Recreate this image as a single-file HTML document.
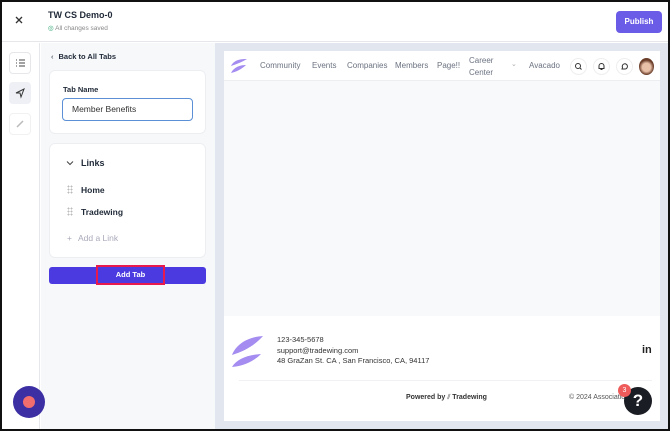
<!DOCTYPE html>
<html><head><meta charset="utf-8"><style>
*{box-sizing:border-box;margin:0;padding:0}
body{width:670px;height:431px;overflow:hidden;font-family:"Liberation Sans",sans-serif;background:#111;position:relative}
.a{position:absolute}
#frame{left:2px;top:2px;width:666px;height:427px;background:#fff;overflow:hidden}
.t{color:#1f2937}
.dots{width:6px;height:9px;background-image:radial-gradient(circle,#bbb 0.8px,transparent 1px);background-size:3px 3px}
.nav{top:59px;font-size:8px;color:#6b7280}
</style></head><body>
<div id="frame" class="a">
 <div class="a" style="left:0;top:0;width:666px;height:40px;background:#fff;border-bottom:1px solid #e5e7eb"></div>
 <svg class="a" style="left:13px;top:14px" width="8" height="8" viewBox="0 0 8 8"><path d="M1 1L7 7M7 1L1 7" stroke="#333" stroke-width="1.3"/></svg>
 <div class="a t" style="left:46px;top:8px;font-size:9px;font-weight:bold">TW CS Demo-0</div>
 <div class="a" style="left:46px;top:22px;font-size:6.5px;color:#888"><span style="color:#22a06b">◎</span> All changes saved</div>
 <div class="a" style="left:614px;top:9px;width:46px;height:22px;background:#6b5ce7;border-radius:4px;color:#fff;font-size:8px;font-weight:bold;text-align:center;line-height:22px">Publish</div>
 <div class="a" style="left:0;top:41px;width:38px;height:388px;background:#fff;border-right:1px solid #e5e7eb"></div>
 <div class="a" style="left:7px;top:50px;width:22px;height:22px;border:1px solid #e5e7eb;border-radius:4px">
  <svg width="20" height="20" viewBox="0 0 20 20"><path d="M6 7h1M9 7h6M6 10h1M9 10h6M6 13h1M9 13h6" stroke="#444" stroke-width="1"/></svg></div>
 <div class="a" style="left:7px;top:80px;width:22px;height:22px;background:#eef0f5;border-radius:4px">
  <svg width="22" height="22" viewBox="0 0 22 22"><path d="M7 11 L15 7 L12 15 L11 11 Z" fill="none" stroke="#333" stroke-width="1"/></svg></div>
 <div class="a" style="left:7px;top:111px;width:22px;height:22px;border:1px solid #f1f1f1;border-radius:4px">
  <svg width="20" height="20" viewBox="0 0 20 20"><path d="M7 13 L13 7" stroke="#bbb" stroke-width="1.5"/></svg></div>
 <div class="a" style="left:39px;top:41px;width:174px;height:388px;background:#f7f8fa"></div>
 <div class="a t" style="left:49px;top:50px;font-size:7.5px;font-weight:bold"><span style="font-weight:normal;margin-right:5px">‹</span>Back to All Tabs</div>
 <div class="a" style="left:47px;top:68px;width:157px;height:64px;background:#fff;border:1px solid #eceef2;border-radius:6px"></div>
 <div class="a t" style="left:61px;top:83px;font-size:7.5px;font-weight:bold">Tab Name</div>
 <div class="a" style="left:60px;top:96px;width:131px;height:23px;border:1.5px solid #5b8fd6;border-radius:4px;font-size:8.5px;color:#333;padding-left:9px;line-height:20px">Member Benefits</div>
 <div class="a" style="left:47px;top:141px;width:157px;height:115px;background:#fff;border:1px solid #eceef2;border-radius:6px"></div>
 <svg class="a" style="left:64px;top:158px" width="8" height="6" viewBox="0 0 8 6"><path d="M1 1.5L4 4.5L7 1.5" fill="none" stroke="#444" stroke-width="1"/></svg>
 <div class="a t" style="left:79px;top:156px;font-size:9px;font-weight:bold">Links</div>
 <div class="a dots" style="left:65px;top:183px"></div>
 <div class="a t" style="left:79px;top:183px;font-size:8.5px;font-weight:bold">Home</div>
 <div class="a dots" style="left:65px;top:205px"></div>
 <div class="a t" style="left:79px;top:205px;font-size:8.5px;font-weight:bold">Tradewing</div>
 <div class="a" style="left:65px;top:231px;font-size:8.5px;color:#aab"><span style="margin-right:6px">+</span>Add a Link</div>
 <div class="a" style="left:47px;top:265px;width:157px;height:17px;background:#4b3ae0;border-radius:3px"></div>
 <div class="a" style="left:94px;top:263px;width:69px;height:20px;border:2px solid #e8194d;color:#fff;font-size:7.5px;font-weight:bold;text-align:center;line-height:16px">Add Tab</div>
 <div class="a" style="left:11px;top:384px;width:32px;height:32px;border-radius:50%;background:#3b2fa3"></div>
 <div class="a" style="left:21px;top:394px;width:12px;height:12px;border-radius:50%;background:#f26e6e"></div>
 <div class="a" style="left:213px;top:41px;width:453px;height:388px;background:#e2e7ef"></div>
 <div class="a" style="left:222px;top:49px;width:436px;height:370px;background:#f8f9fb"></div>
 <div class="a" style="left:222px;top:49px;width:436px;height:30px;background:#fff;border-bottom:1px solid #eceef2"></div>
 <svg class="a" style="left:228px;top:56px" width="18" height="16" viewBox="0 0 18 16"><path d="M1 8 C4 2 10 1 17 1 C12 4 7 6 1 8Z M1 15 C4 9 10 7 16 7 C12 11 6 14 1 15Z" fill="#a48cf0"/></svg>
 <div class="a nav" style="left:258px">Community</div>
 <div class="a nav" style="left:310px">Events</div>
 <div class="a nav" style="left:345px">Companies</div>
 <div class="a nav" style="left:393px">Members</div>
 <div class="a nav" style="left:435px">Page!!</div>
 <div class="a nav" style="top:53px;left:467px;line-height:12px">Career<br>Center</div>
 <div class="a" style="top:58px;left:509px;font-size:7px;color:#aaa">⌄</div>
 <div class="a nav" style="left:527px">Avacado</div>
 <div class="a" style="left:568px;top:56px;width:17px;height:17px;border:1px solid #eee;border-radius:50%"><svg width="15" height="15" viewBox="0 0 15 15"><circle cx="7" cy="7" r="2.5" fill="none" stroke="#333"/><path d="M9 9L10.5 10.5" stroke="#333"/></svg></div>
 <div class="a" style="left:591px;top:56px;width:17px;height:17px;border:1px solid #eee;border-radius:50%"><svg width="15" height="15" viewBox="0 0 15 15"><path d="M5 9.5V7a2.5 2.5 0 015 0v2.5zM6.5 10.5h2" fill="none" stroke="#333"/></svg></div>
 <div class="a" style="left:614px;top:56px;width:17px;height:17px;border:1px solid #eee;border-radius:50%"><svg width="15" height="15" viewBox="0 0 15 15"><path d="M5 10L5.5 8.5A2.6 2.6 0 118 10Z" fill="none" stroke="#333"/></svg></div>
 <div class="a" style="left:637px;top:56px;width:15px;height:17px;border-radius:50%;background:radial-gradient(circle at 50% 55%,#e8c0a8 35%,#6b3e2a 60%)"></div>
 <div class="a" style="left:222px;top:314px;width:436px;height:105px;background:#fff"></div>
 <svg class="a" style="left:229px;top:333px" width="33" height="33" viewBox="0 0 33 33"><path d="M1 20 C6 8 18 2 32 1 C24 10 14 16 1 20Z M1 32 C6 24 16 20 30 19 C22 27 12 31 1 32Z" fill="#a48cf0"/></svg>
 <div class="a" style="left:275px;top:333px;font-size:7.5px;color:#333;line-height:10.5px">123-345-5678<br>support@tradewing.com<br>48 GraZan St. CA , San Francisco, CA, 94117</div>
 <div class="a" style="left:640px;top:342px;font-size:11px;font-weight:bold;color:#222">in</div>
 <div class="a" style="left:237px;top:378px;width:413px;height:1px;background:#f0f1f4"></div>
 <div class="a" style="left:404px;top:392px;font-size:7px;font-weight:bold;color:#333">Powered by <span style="color:#888">⫽</span> Tradewing</div>
 <div class="a" style="left:567px;top:392px;font-size:7px;color:#555">© 2024 Association</div>
 <div class="a" style="left:622px;top:385px;width:28px;height:28px;border-radius:50%;background:#1a1d24;color:#fff;font-size:17px;font-weight:bold;text-align:center;line-height:28px">?</div>
 <div class="a" style="left:616px;top:382px;width:13px;height:13px;border-radius:50%;background:#ef5a5a;color:#fff;font-size:7px;text-align:center;line-height:13px">3</div>
</div>
</body></html>
